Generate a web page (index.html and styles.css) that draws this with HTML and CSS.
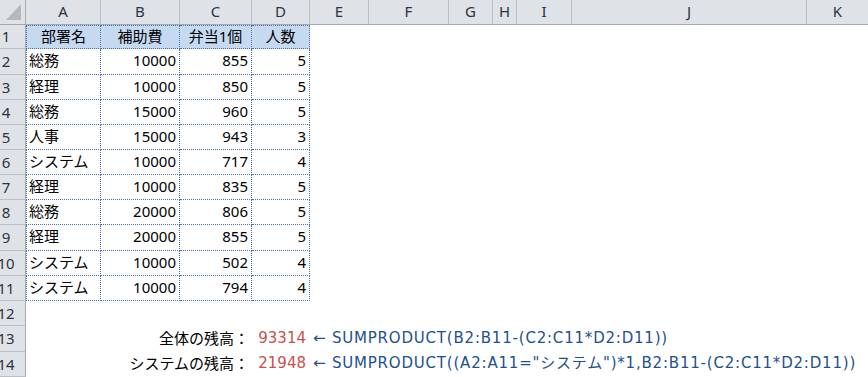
FILE: index.html
```html
<!DOCTYPE html>
<html lang="ja">
<head>
<meta charset="utf-8">
<title>Sheet</title>
<link rel="stylesheet" href="styles.css">
</head>
<body>
<div class="sheet">
  <!-- column header row -->
  <div class="corner"><svg width="25" height="24" viewBox="0 0 25 24"><polygon points="21,4 21,20 6,20" fill="#b5b9be"/></svg></div>
  <div class="colh">A</div>
  <div class="colh">B</div>
  <div class="colh">C</div>
  <div class="colh">D</div>
  <div class="colh">E</div>
  <div class="colh">F</div>
  <div class="colh">G</div>
  <div class="colh">H</div>
  <div class="colh">I</div>
  <div class="colh">J</div>
  <div class="colh last">K</div>

  <!-- row 1 -->
  <div class="rowh"><span>1</span></div>
  <div class="cell tb first top hd">部署名</div>
  <div class="cell tb top hd">補助費</div>
  <div class="cell tb top hd">弁当1個</div>
  <div class="cell tb top hd">人数</div>
  <div class="rest"></div>

  <!-- row 2 -->
  <div class="rowh"><span>2</span></div>
  <div class="cell tb first txt">総務</div>
  <div class="cell tb num">10000</div>
  <div class="cell tb num">855</div>
  <div class="cell tb num">5</div>
  <div class="rest"></div>

  <!-- row 3 -->
  <div class="rowh"><span>3</span></div>
  <div class="cell tb first txt">経理</div>
  <div class="cell tb num">10000</div>
  <div class="cell tb num">850</div>
  <div class="cell tb num">5</div>
  <div class="rest"></div>

  <!-- row 4 -->
  <div class="rowh"><span>4</span></div>
  <div class="cell tb first txt">総務</div>
  <div class="cell tb num">15000</div>
  <div class="cell tb num">960</div>
  <div class="cell tb num">5</div>
  <div class="rest"></div>

  <!-- row 5 -->
  <div class="rowh"><span>5</span></div>
  <div class="cell tb first txt">人事</div>
  <div class="cell tb num">15000</div>
  <div class="cell tb num">943</div>
  <div class="cell tb num">3</div>
  <div class="rest"></div>

  <!-- row 6 -->
  <div class="rowh"><span>6</span></div>
  <div class="cell tb first txt">システム</div>
  <div class="cell tb num">10000</div>
  <div class="cell tb num">717</div>
  <div class="cell tb num">4</div>
  <div class="rest"></div>

  <!-- row 7 -->
  <div class="rowh"><span>7</span></div>
  <div class="cell tb first txt">経理</div>
  <div class="cell tb num">10000</div>
  <div class="cell tb num">835</div>
  <div class="cell tb num">5</div>
  <div class="rest"></div>

  <!-- row 8 -->
  <div class="rowh"><span>8</span></div>
  <div class="cell tb first txt">総務</div>
  <div class="cell tb num">20000</div>
  <div class="cell tb num">806</div>
  <div class="cell tb num">5</div>
  <div class="rest"></div>

  <!-- row 9 -->
  <div class="rowh"><span>9</span></div>
  <div class="cell tb first txt">経理</div>
  <div class="cell tb num">20000</div>
  <div class="cell tb num">855</div>
  <div class="cell tb num">5</div>
  <div class="rest"></div>

  <!-- row 10 -->
  <div class="rowh"><span>10</span></div>
  <div class="cell tb first txt">システム</div>
  <div class="cell tb num">10000</div>
  <div class="cell tb num">502</div>
  <div class="cell tb num">4</div>
  <div class="rest"></div>

  <!-- row 11 -->
  <div class="rowh"><span>11</span></div>
  <div class="cell tb first txt">システム</div>
  <div class="cell tb num">10000</div>
  <div class="cell tb num">794</div>
  <div class="cell tb num">4</div>
  <div class="rest"></div>

  <!-- row 12 -->
  <div class="rowh"><span>12</span></div>
  <div class="full"></div>

  <!-- row 13 -->
  <div class="rowh"><span>13</span></div>
  <div class="cell label">全体の残高：</div>
  <div class="cell num res">93314</div>
  <div class="cell formula">← SUMPRODUCT(B2:B11-(C2:C11*D2:D11))</div>

  <!-- row 14 -->
  <div class="rowh"><span>14</span></div>
  <div class="cell label">システムの残高：</div>
  <div class="cell num res">21948</div>
  <div class="cell formula">← SUMPRODUCT((A2:A11="システム")*1,B2:B11-(C2:C11*D2:D11))</div>
</div>
</body>
</html>
```

FILE: styles.css
```css
* { box-sizing: border-box; }

html, body {
  margin: 0;
  padding: 0;
  background: #ffffff;
  overflow: hidden;
}

body {
  font-family: "Noto Sans", "Noto Sans CJK JP", sans-serif;
  font-size: 15px;
  color: #000;
}

.sheet {
  display: grid;
  grid-template-columns: 26px 75px 79px 72px 58px 59px 80px 44px 24px 55px 235px 61px;
  grid-template-rows: 25px 24px 26px 25px 25px 25px 25px 25px 25px 26px 25px 25px 25px 26px 25px;
  width: 868px;
  height: 377px;
}

.corner {
  background: #dfe2e6;
  border-right: 1px solid #a4a9ae;
  border-bottom: 1px solid #a4a9ae;
  display: flex;
}

.colh {
  background: #dfe3e8;
  border-right: 1px solid #bcc0c5;
  border-bottom: 1px solid #a4a9ae;
  display: flex;
  align-items: center;
  justify-content: center;
  color: #2b3440;
  line-height: 1;
  padding-bottom: 1px;
}

.colh.last { border-right: none; }

.rowh {
  background: #dfe3e8;
  border-right: 1px solid #a4a9ae;
  border-bottom: 1px solid #bcc0c5;
  overflow: hidden;
  display: flex;
  align-items: center;
  color: #2b3440;
  line-height: 1;
}

.rowh span {
  width: 12px;
  flex: none;
  display: flex;
  justify-content: center;
  white-space: nowrap;
}

.cell {
  display: flex;
  align-items: center;
  white-space: nowrap;
  line-height: 1;
  padding-bottom: 2px;
}

.tb {
  border-right: 1px dotted #4a72b0;
  border-bottom: 1px dotted #4a72b0;
}

.tb.first { border-left: 1px dotted #4a72b0; }
.tb.top { border-top: 1px dotted #4a72b0; }

.hd {
  background: #c5d9f1;
  justify-content: center;
}

.txt {
  padding-left: 2px;
}

.num {
  justify-content: flex-end;
  padding-right: 3px;
}

.rest { grid-column: span 7; }
.full { grid-column: span 11; }

.label {
  grid-column: span 3;
  justify-content: flex-end;
  padding-right: 3px;
}

.res {
  font-family: "DejaVu Sans", "Noto Sans CJK JP", sans-serif;
  color: #c9504d;
  padding-right: 4px;
}

.formula {
  grid-column: span 7;
  padding-left: 3px;
  font-family: "DejaVu Sans", "Noto Sans CJK JP", sans-serif;
  letter-spacing: 0.8px;
  color: #22508e;
  overflow: visible;
}
```
